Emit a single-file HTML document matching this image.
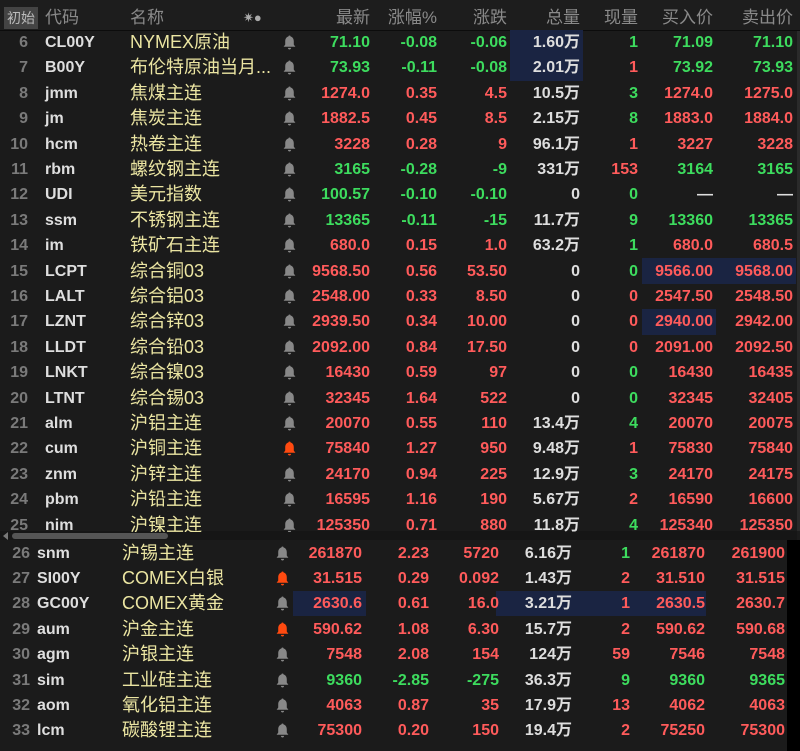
<!DOCTYPE html>
<html><head><meta charset="utf-8">
<style>
*{margin:0;padding:0;box-sizing:border-box}
body{width:800px;height:751px;background:#1b1b1b;overflow:hidden;position:relative;font-family:"Liberation Sans","Noto Sans CJK SC",sans-serif;font-weight:bold;font-size:16px}
.hd{position:absolute;left:0;top:0;width:800px;height:31px;background:#1d1d1d;border-bottom:1px solid #0c0c0c;color:#8a8a8a;font-weight:normal;font-size:17px}
.hd span{position:absolute;top:6px;line-height:24px}
.cs{position:absolute;left:4px;top:7px;width:34px;height:22px;background:#444;color:#bbb;font-size:14px;line-height:22px;text-align:center}
.hl{position:absolute;background:#1a2442}
.r{position:absolute;left:0;height:25px;width:800px;line-height:25px}
.r span{position:absolute;top:0;white-space:nowrap}
.i{left:0;width:28px;text-align:right;color:#7a7a7a}
.cd{left:45px;color:#dedede}
.nm{left:130px;color:#ebe5a2;font-weight:normal;font-size:18px}
.p1{left:300px;width:70px;text-align:right}
.p2{left:375px;width:62px;text-align:right}
.p3{left:445px;width:62px;text-align:right}
.p4{left:510px;width:70px;text-align:right;color:#dedede}
.p5{left:590px;width:48px;text-align:right}
.p6{left:645px;width:68px;text-align:right}
.p7{left:720px;width:73px;text-align:right}
.b span{margin-left:-8px}
.b .i{margin-left:0;width:30px}
.g{color:#3ddc5e}.d{color:#ff5b5b}.w{color:#dedede}
.bot{position:absolute;left:0;top:540px;width:787px;height:211px;background:#1b1b1b}
.blk{position:absolute;left:787px;top:540px;width:13px;height:211px;background:#000}
</style></head><body>
<div class="hd">
<div class="cs">初始</div>
<span style="left:45px">代码</span>
<span style="left:130px">名称</span>
<span style="left:243px;font-size:13px;color:#aaa">✷●</span>
<span style="left:300px;width:70px;text-align:right">最新</span>
<span style="left:375px;width:62px;text-align:right">涨幅%</span>
<span style="left:445px;width:62px;text-align:right">涨跌</span>
<span style="left:510px;width:70px;text-align:right">总量</span>
<span style="left:590px;width:48px;text-align:right">现量</span>
<span style="left:645px;width:68px;text-align:right">买入价</span>
<span style="left:720px;width:73px;text-align:right">卖出价</span>
</div>
<div style="position:absolute;left:797px;top:31px;width:3px;height:500px;background:#2a2a2a"></div>
<div class="hl" style="left:510px;top:30px;width:73px;height:51px"></div>
<div class="hl" style="left:642px;top:258px;width:154px;height:26px"></div>
<div class="hl" style="left:642px;top:309px;width:74px;height:26px"></div>
<div class="bot"></div><div class="blk"></div>
<div class="hl" style="left:293px;top:591px;width:73px;height:25px"></div>
<div class="hl" style="left:496px;top:591px;width:210px;height:25px"></div>
<div style="position:absolute;left:0;top:531px;width:797px;height:9px;background:#161616"></div>
<div style="position:absolute;left:12px;top:533px;width:156px;height:6px;border-radius:3px;background:#555"></div>
<div style="position:absolute;left:3px;top:532px;width:0;height:0;border-top:4px solid transparent;border-bottom:4px solid transparent;border-right:5px solid #777"></div>

<svg width="0" height="0" style="position:absolute"><defs><symbol id="bell" viewBox="0 0 12 14"><path d="M6 0.5c0.6 0 1 0.4 1 0.9C9 1.9 10 3.6 10 6v3l1.5 2H0.5L2 9V6c0-2.4 1-4.1 3-4.6C5 0.9 5.4 0.5 6 0.5zM4.5 12h3c0 0.9-0.7 1.5-1.5 1.5S4.5 12.9 4.5 12z"/></symbol></defs></svg>

<div class="r" style="top:30px"><span class="i">6</span><span class="cd">CL00Y</span><span class="nm">NYMEX原油</span><svg style="position:absolute;left:283px;top:5px" width="13" height="15" fill="#888"><use href="#bell"/></svg><span class="p1 g">71.10</span><span class="p2 g">-0.08</span><span class="p3 g">-0.06</span><span class="p4">1.60万</span><span class="p5 g">1</span><span class="p6 g">71.09</span><span class="p7 g">71.10</span></div>
<div class="r" style="top:55.4px"><span class="i">7</span><span class="cd">B00Y</span><span class="nm">布伦特原油当月...</span><svg style="position:absolute;left:283px;top:5px" width="13" height="15" fill="#888"><use href="#bell"/></svg><span class="p1 g">73.93</span><span class="p2 g">-0.11</span><span class="p3 g">-0.08</span><span class="p4">2.01万</span><span class="p5 d">1</span><span class="p6 g">73.92</span><span class="p7 g">73.93</span></div>
<div class="r" style="top:80.8px"><span class="i">8</span><span class="cd">jmm</span><span class="nm">焦煤主连</span><svg style="position:absolute;left:283px;top:5px" width="13" height="15" fill="#888"><use href="#bell"/></svg><span class="p1 d">1274.0</span><span class="p2 d">0.35</span><span class="p3 d">4.5</span><span class="p4">10.5万</span><span class="p5 g">3</span><span class="p6 d">1274.0</span><span class="p7 d">1275.0</span></div>
<div class="r" style="top:106.2px"><span class="i">9</span><span class="cd">jm</span><span class="nm">焦炭主连</span><svg style="position:absolute;left:283px;top:5px" width="13" height="15" fill="#888"><use href="#bell"/></svg><span class="p1 d">1882.5</span><span class="p2 d">0.45</span><span class="p3 d">8.5</span><span class="p4">2.15万</span><span class="p5 g">8</span><span class="p6 d">1883.0</span><span class="p7 d">1884.0</span></div>
<div class="r" style="top:131.6px"><span class="i">10</span><span class="cd">hcm</span><span class="nm">热卷主连</span><svg style="position:absolute;left:283px;top:5px" width="13" height="15" fill="#888"><use href="#bell"/></svg><span class="p1 d">3228</span><span class="p2 d">0.28</span><span class="p3 d">9</span><span class="p4">96.1万</span><span class="p5 d">1</span><span class="p6 d">3227</span><span class="p7 d">3228</span></div>
<div class="r" style="top:157px"><span class="i">11</span><span class="cd">rbm</span><span class="nm">螺纹钢主连</span><svg style="position:absolute;left:283px;top:5px" width="13" height="15" fill="#888"><use href="#bell"/></svg><span class="p1 g">3165</span><span class="p2 g">-0.28</span><span class="p3 g">-9</span><span class="p4">331万</span><span class="p5 d">153</span><span class="p6 g">3164</span><span class="p7 g">3165</span></div>
<div class="r" style="top:182.4px"><span class="i">12</span><span class="cd">UDI</span><span class="nm">美元指数</span><svg style="position:absolute;left:283px;top:5px" width="13" height="15" fill="#888"><use href="#bell"/></svg><span class="p1 g">100.57</span><span class="p2 g">-0.10</span><span class="p3 g">-0.10</span><span class="p4">0</span><span class="p5 g">0</span><span class="p6 w">—</span><span class="p7 w">—</span></div>
<div class="r" style="top:207.8px"><span class="i">13</span><span class="cd">ssm</span><span class="nm">不锈钢主连</span><svg style="position:absolute;left:283px;top:5px" width="13" height="15" fill="#888"><use href="#bell"/></svg><span class="p1 g">13365</span><span class="p2 g">-0.11</span><span class="p3 g">-15</span><span class="p4">11.7万</span><span class="p5 g">9</span><span class="p6 g">13360</span><span class="p7 g">13365</span></div>
<div class="r" style="top:233.2px"><span class="i">14</span><span class="cd">im</span><span class="nm">铁矿石主连</span><svg style="position:absolute;left:283px;top:5px" width="13" height="15" fill="#888"><use href="#bell"/></svg><span class="p1 d">680.0</span><span class="p2 d">0.15</span><span class="p3 d">1.0</span><span class="p4">63.2万</span><span class="p5 g">1</span><span class="p6 d">680.0</span><span class="p7 d">680.5</span></div>
<div class="r" style="top:258.6px"><span class="i">15</span><span class="cd">LCPT</span><span class="nm">综合铜03</span><svg style="position:absolute;left:283px;top:5px" width="13" height="15" fill="#888"><use href="#bell"/></svg><span class="p1 d">9568.50</span><span class="p2 d">0.56</span><span class="p3 d">53.50</span><span class="p4">0</span><span class="p5 g">0</span><span class="p6 d">9566.00</span><span class="p7 d">9568.00</span></div>
<div class="r" style="top:284px"><span class="i">16</span><span class="cd">LALT</span><span class="nm">综合铝03</span><svg style="position:absolute;left:283px;top:5px" width="13" height="15" fill="#888"><use href="#bell"/></svg><span class="p1 d">2548.00</span><span class="p2 d">0.33</span><span class="p3 d">8.50</span><span class="p4">0</span><span class="p5 d">0</span><span class="p6 d">2547.50</span><span class="p7 d">2548.50</span></div>
<div class="r" style="top:309.4px"><span class="i">17</span><span class="cd">LZNT</span><span class="nm">综合锌03</span><svg style="position:absolute;left:283px;top:5px" width="13" height="15" fill="#888"><use href="#bell"/></svg><span class="p1 d">2939.50</span><span class="p2 d">0.34</span><span class="p3 d">10.00</span><span class="p4">0</span><span class="p5 d">0</span><span class="p6 d">2940.00</span><span class="p7 d">2942.00</span></div>
<div class="r" style="top:334.8px"><span class="i">18</span><span class="cd">LLDT</span><span class="nm">综合铅03</span><svg style="position:absolute;left:283px;top:5px" width="13" height="15" fill="#888"><use href="#bell"/></svg><span class="p1 d">2092.00</span><span class="p2 d">0.84</span><span class="p3 d">17.50</span><span class="p4">0</span><span class="p5 d">0</span><span class="p6 d">2091.00</span><span class="p7 d">2092.50</span></div>
<div class="r" style="top:360.2px"><span class="i">19</span><span class="cd">LNKT</span><span class="nm">综合镍03</span><svg style="position:absolute;left:283px;top:5px" width="13" height="15" fill="#888"><use href="#bell"/></svg><span class="p1 d">16430</span><span class="p2 d">0.59</span><span class="p3 d">97</span><span class="p4">0</span><span class="p5 g">0</span><span class="p6 d">16430</span><span class="p7 d">16435</span></div>
<div class="r" style="top:385.6px"><span class="i">20</span><span class="cd">LTNT</span><span class="nm">综合锡03</span><svg style="position:absolute;left:283px;top:5px" width="13" height="15" fill="#888"><use href="#bell"/></svg><span class="p1 d">32345</span><span class="p2 d">1.64</span><span class="p3 d">522</span><span class="p4">0</span><span class="p5 g">0</span><span class="p6 d">32345</span><span class="p7 d">32405</span></div>
<div class="r" style="top:411px"><span class="i">21</span><span class="cd">alm</span><span class="nm">沪铝主连</span><svg style="position:absolute;left:283px;top:5px" width="13" height="15" fill="#888"><use href="#bell"/></svg><span class="p1 d">20070</span><span class="p2 d">0.55</span><span class="p3 d">110</span><span class="p4">13.4万</span><span class="p5 g">4</span><span class="p6 d">20070</span><span class="p7 d">20075</span></div>
<div class="r" style="top:436.4px"><span class="i">22</span><span class="cd">cum</span><span class="nm">沪铜主连</span><svg style="position:absolute;left:283px;top:5px" width="13" height="15" fill="#ff4a10"><use href="#bell"/></svg><span class="p1 d">75840</span><span class="p2 d">1.27</span><span class="p3 d">950</span><span class="p4">9.48万</span><span class="p5 d">1</span><span class="p6 d">75830</span><span class="p7 d">75840</span></div>
<div class="r" style="top:461.8px"><span class="i">23</span><span class="cd">znm</span><span class="nm">沪锌主连</span><svg style="position:absolute;left:283px;top:5px" width="13" height="15" fill="#888"><use href="#bell"/></svg><span class="p1 d">24170</span><span class="p2 d">0.94</span><span class="p3 d">225</span><span class="p4">12.9万</span><span class="p5 g">3</span><span class="p6 d">24170</span><span class="p7 d">24175</span></div>
<div class="r" style="top:487.2px"><span class="i">24</span><span class="cd">pbm</span><span class="nm">沪铅主连</span><svg style="position:absolute;left:283px;top:5px" width="13" height="15" fill="#888"><use href="#bell"/></svg><span class="p1 d">16595</span><span class="p2 d">1.16</span><span class="p3 d">190</span><span class="p4">5.67万</span><span class="p5 d">2</span><span class="p6 d">16590</span><span class="p7 d">16600</span></div>
<div class="r" style="top:512.6px;height:19px;overflow:hidden"><span class="i">25</span><span class="cd">nim</span><span class="nm">沪镍主连</span><svg style="position:absolute;left:283px;top:5px" width="13" height="15" fill="#888"><use href="#bell"/></svg><span class="p1 d">125350</span><span class="p2 d">0.71</span><span class="p3 d">880</span><span class="p4">11.8万</span><span class="p5 g">4</span><span class="p6 d">125340</span><span class="p7 d">125350</span></div>

<div class="r b" style="top:540.5px"><span class="i">26</span><span class="cd">snm</span><span class="nm">沪锡主连</span><svg style="position:absolute;left:276px;top:5px" width="13" height="15" fill="#888"><use href="#bell"/></svg><span class="p1 d">261870</span><span class="p2 d">2.23</span><span class="p3 d">5720</span><span class="p4">6.16万</span><span class="p5 g">1</span><span class="p6 d">261870</span><span class="p7 d">261900</span></div>
<div class="r b" style="top:565.9px"><span class="i">27</span><span class="cd">SI00Y</span><span class="nm">COMEX白银</span><svg style="position:absolute;left:276px;top:5px" width="13" height="15" fill="#ff4a10"><use href="#bell"/></svg><span class="p1 d">31.515</span><span class="p2 d">0.29</span><span class="p3 d">0.092</span><span class="p4">1.43万</span><span class="p5 d">2</span><span class="p6 d">31.510</span><span class="p7 d">31.515</span></div>
<div class="r b" style="top:591.3px"><span class="i">28</span><span class="cd">GC00Y</span><span class="nm">COMEX黄金</span><svg style="position:absolute;left:276px;top:5px" width="13" height="15" fill="#888"><use href="#bell"/></svg><span class="p1 d">2630.6</span><span class="p2 d">0.61</span><span class="p3 d">16.0</span><span class="p4">3.21万</span><span class="p5 d">1</span><span class="p6 d">2630.5</span><span class="p7 d">2630.7</span></div>
<div class="r b" style="top:616.7px"><span class="i">29</span><span class="cd">aum</span><span class="nm">沪金主连</span><svg style="position:absolute;left:276px;top:5px" width="13" height="15" fill="#ff4a10"><use href="#bell"/></svg><span class="p1 d">590.62</span><span class="p2 d">1.08</span><span class="p3 d">6.30</span><span class="p4">15.7万</span><span class="p5 d">2</span><span class="p6 d">590.62</span><span class="p7 d">590.68</span></div>
<div class="r b" style="top:642.1px"><span class="i">30</span><span class="cd">agm</span><span class="nm">沪银主连</span><svg style="position:absolute;left:276px;top:5px" width="13" height="15" fill="#888"><use href="#bell"/></svg><span class="p1 d">7548</span><span class="p2 d">2.08</span><span class="p3 d">154</span><span class="p4">124万</span><span class="p5 d">59</span><span class="p6 d">7546</span><span class="p7 d">7548</span></div>
<div class="r b" style="top:667.5px"><span class="i">31</span><span class="cd">sim</span><span class="nm">工业硅主连</span><svg style="position:absolute;left:276px;top:5px" width="13" height="15" fill="#888"><use href="#bell"/></svg><span class="p1 g">9360</span><span class="p2 g">-2.85</span><span class="p3 g">-275</span><span class="p4">36.3万</span><span class="p5 g">9</span><span class="p6 g">9360</span><span class="p7 g">9365</span></div>
<div class="r b" style="top:692.9px"><span class="i">32</span><span class="cd">aom</span><span class="nm">氧化铝主连</span><svg style="position:absolute;left:276px;top:5px" width="13" height="15" fill="#888"><use href="#bell"/></svg><span class="p1 d">4063</span><span class="p2 d">0.87</span><span class="p3 d">35</span><span class="p4">17.9万</span><span class="p5 d">13</span><span class="p6 d">4062</span><span class="p7 d">4063</span></div>
<div class="r b" style="top:718.3px"><span class="i">33</span><span class="cd">lcm</span><span class="nm">碳酸锂主连</span><svg style="position:absolute;left:276px;top:5px" width="13" height="15" fill="#888"><use href="#bell"/></svg><span class="p1 d">75300</span><span class="p2 d">0.20</span><span class="p3 d">150</span><span class="p4">19.4万</span><span class="p5 d">2</span><span class="p6 d">75250</span><span class="p7 d">75300</span></div>
</body></html>
